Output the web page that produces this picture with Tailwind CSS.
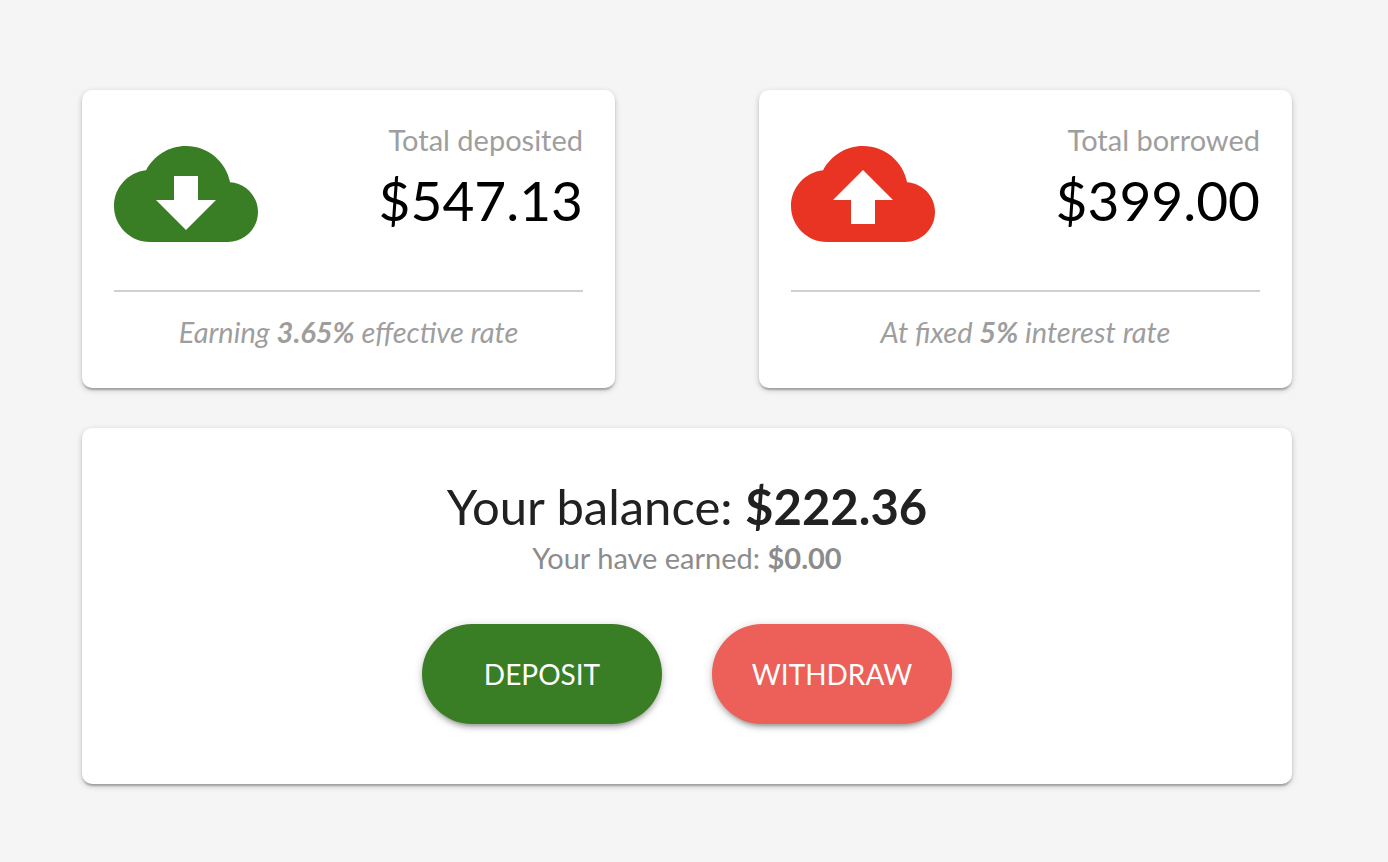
<!DOCTYPE html>
<html lang="en">
<head>
<meta charset="utf-8">
<meta name="viewport" content="width=device-width, initial-scale=1">
<title>Balance overview</title>
<script src="https://cdn.jsdelivr.net/npm/@tailwindcss/browser@4"></script>
</head>
<body class="min-h-screen bg-[#f5f5f5] font-['Lato','Open_Sans',sans-serif]">
<main class="flex flex-col gap-10 pt-[90px] pr-24 pb-[78px] pl-[82px]">
  <div class="grid grid-cols-2 gap-36">
    <section class="rounded-[10px] bg-white px-8 pt-8 pb-[38px] shadow-[0_2px_6px_rgba(0,0,0,0.2),0_2px_2px_rgba(0,0,0,0.14),0_4px_2px_-2px_rgba(0,0,0,0.12)]">
      <div class="flex justify-between border-b-2 border-[#d0d0d0] pb-6">
        <svg class="size-36 fill-[#397e24]" viewBox="0 0 24 24" aria-hidden="true"><path d="M19.35 10.04C18.67 6.59 15.64 4 12 4 9.11 4 6.6 5.64 5.35 8.04 2.34 8.36 0 10.91 0 14c0 3.31 2.69 6 6 6h13c2.76 0 5-2.24 5-5 0-2.64-2.05-4.78-4.65-4.96zM17 13l-5 5-5-5h3V9h4v4h3z"/></svg>
        <div class="text-right">
          <h2 class="text-[29px] leading-9 text-[#9e9e9e]">Total deposited</h2>
          <p class="text-[55px] leading-[84px] text-black">$547.13</p>
        </div>
      </div>
      <p class="pt-[22px] text-center text-[29px] leading-9 text-[#9e9e9e] italic">Earning <strong class="font-bold">3.65%</strong> effective rate</p>
    </section>
    <section class="rounded-[10px] bg-white px-8 pt-8 pb-[38px] shadow-[0_2px_6px_rgba(0,0,0,0.2),0_2px_2px_rgba(0,0,0,0.14),0_4px_2px_-2px_rgba(0,0,0,0.12)]">
      <div class="flex justify-between border-b-2 border-[#d0d0d0] pb-6">
        <svg class="size-36 fill-[#e93323]" viewBox="0 0 24 24" aria-hidden="true"><path d="M19.35 10.04C18.67 6.59 15.64 4 12 4 9.11 4 6.6 5.64 5.35 8.04 2.34 8.36 0 10.91 0 14c0 3.31 2.69 6 6 6h13c2.76 0 5-2.24 5-5 0-2.64-2.05-4.78-4.65-4.96zM14 13v4h-4v-4H7l5-5 5 5h-3z"/></svg>
        <div class="text-right">
          <h2 class="text-[29px] leading-9 text-[#9e9e9e]">Total borrowed</h2>
          <p class="text-[55px] leading-[84px] text-black">$399.00</p>
        </div>
      </div>
      <p class="pt-[22px] text-center text-[29px] leading-9 text-[#9e9e9e] italic">At fixed <strong class="font-bold">5%</strong> interest rate</p>
    </section>
  </div>
  <section class="rounded-[10px] bg-white px-8 pt-12 pb-[60px] text-center shadow-[0_2px_6px_rgba(0,0,0,0.2),0_2px_2px_rgba(0,0,0,0.14),0_4px_2px_-2px_rgba(0,0,0,0.12)]">
    <h1 class="text-[49px] leading-[60px] text-[#212121]">Your balance: <strong class="font-bold">$222.36</strong></h1>
    <p class="pt-1 text-[29px] leading-9 text-[#8c8c8c]">Your have earned: <strong class="font-bold">$0.00</strong></p>
    <div class="flex justify-center gap-[50px] pt-12">
      <button type="button" class="h-[100px] w-60 rounded-full bg-[#397e24] text-[28px] text-white shadow-[0_2px_10px_rgba(0,0,0,0.2),0_4px_4px_rgba(0,0,0,0.14),0_6px_2px_-4px_rgba(0,0,0,0.12)]">DEPOSIT</button>
      <button type="button" class="h-[100px] w-60 rounded-full bg-[#ed5f59] text-[28px] text-white shadow-[0_2px_10px_rgba(0,0,0,0.2),0_4px_4px_rgba(0,0,0,0.14),0_6px_2px_-4px_rgba(0,0,0,0.12)]">WITHDRAW</button>
    </div>
  </section>
</main>
</body>
</html>
